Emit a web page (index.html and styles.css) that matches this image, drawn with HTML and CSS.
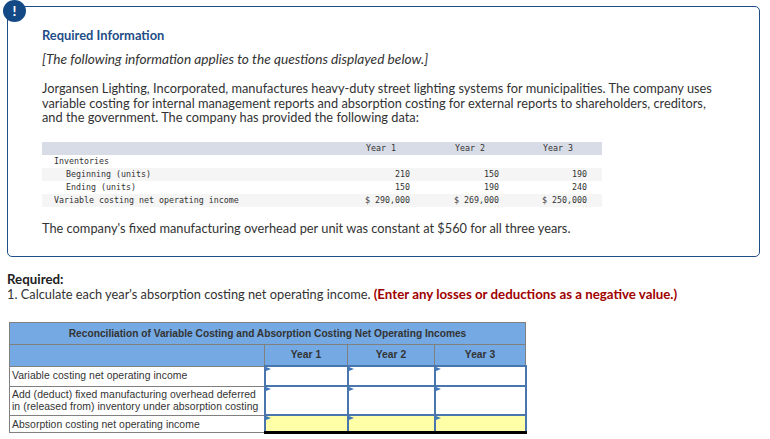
FILE: index.html
```html
<!DOCTYPE html>
<html lang="en">
<head>
<meta charset="utf-8">
<title>Required Information</title>
<link rel="stylesheet" href="styles.css">
</head>
<body>
<section class="info">
  <div class="badge">!</div>
  <h2 class="info-title">Required Information</h2>
  <p class="note">[The following information applies to the questions displayed below.]</p>
  <p class="para">Jorgansen Lighting, Incorporated, manufactures heavy-duty street lighting systems for municipalities. The company uses variable costing for internal management reports and absorption costing for external reports to shareholders, creditors, and the government. The company has provided the following data:</p>
  <table class="data">
    <colgroup><col class="dc0"><col class="dc1"><col class="dc2"><col class="dc3"></colgroup>
    <tr class="data-head"><td></td><td class="yr">Year 1</td><td class="yr">Year 2</td><td class="yr">Year 3</td></tr>
    <tr><td class="l1">Inventories</td><td></td><td></td><td></td></tr>
    <tr class="alt"><td class="l2">Beginning (units)</td><td class="num">210</td><td class="num">150</td><td class="num">190</td></tr>
    <tr><td class="l2">Ending (units)</td><td class="num">150</td><td class="num">190</td><td class="num">240</td></tr>
    <tr class="alt"><td class="l1">Variable costing net operating income</td><td class="num">$ 290,000</td><td class="num">$ 269,000</td><td class="num">$ 250,000</td></tr>
  </table>
  <p class="para last">The company's fixed manufacturing overhead per unit was constant at $560 for all three years.</p>
</section>
<section class="req">
  <strong class="req-title">Required:</strong>
  <p class="req-text">1. Calculate each year's absorption costing net operating income. <strong class="red">(Enter any losses or deductions as a negative value.)</strong></p>
</section>
<table class="recon">
  <colgroup><col class="rc0"><col class="rc1"><col class="rc2"><col class="rc3"></colgroup>
  <tr class="title-row"><th colspan="4">Reconciliation of Variable Costing and Absorption Costing Net Operating Incomes</th></tr>
  <tr class="head-row"><th></th><th>Year 1</th><th>Year 2</th><th>Year 3</th></tr>
  <tr class="r1"><td class="lab">Variable costing net operating income</td><td class="cell"></td><td class="cell"></td><td class="cell"></td></tr>
  <tr class="r2"><td class="lab">Add (deduct) fixed manufacturing overhead deferred<br>in (released from) inventory under absorption costing</td><td class="cell"></td><td class="cell"></td><td class="cell"></td></tr>
  <tr class="r3"><td class="lab">Absorption costing net operating income</td><td class="cell total"></td><td class="cell total"></td><td class="cell total"></td></tr>
</table>
</body>
</html>
```
FILE: styles.css
```css
html, body { margin: 0; padding: 0; background: #fff; }
body {
  width: 770px;
  height: 439px;
  overflow: hidden;
  font-family: "Lato", "Open Sans", sans-serif;
  color: #333;
  position: relative;
}
.info {
  box-sizing: border-box;
  width: 753px;
  height: 251px;
  margin: 6px 0 0 7px;
  padding: 21px 34px 0 34px;
  border: 1px solid #1f4e87;
  border-radius: 5px;
  position: relative;
}
.badge {
  position: absolute;
  left: -5px;
  top: -7px;
  width: 23px;
  height: 22px;
  border-radius: 50%;
  background: #134a86;
  color: #fff;
  font: bold 14px/21px "Lato", sans-serif;
  text-align: center;
}
.info-title {
  margin: 0;
  font-size: 12.9px;
  line-height: 15px;
  font-weight: 700;
  color: #1f4e87;
}
.note {
  margin: 8px 0 0;
  font-size: 13.7px;
  line-height: 15px;
  font-style: italic;
}
.para {
  margin: 15px 0 0;
  font-size: 12.8px;
  line-height: 14.5px;
  width: 676px;
}
.data {
  border-collapse: collapse;
  width: 560px;
  margin-top: 17px;
  table-layout: fixed;
  font-family: "DejaVu Sans Mono", monospace;
  font-size: 8.3px;
  line-height: 13px;
  color: #333;
}
.dc0 { width: 300px; }
.dc1 { width: 83px; }
.dc2 { width: 89px; }
.dc3 { width: 88px; }
.data td { padding: 0; height: 13px; white-space: pre; }
.data-head { background: #d8dce6; }
.alt { background: #f5f5f5; }
.data td.l1 { padding-left: 12px; }
.data td.l2 { padding-left: 24px; }
.data td.yr { text-align: right; padding-right: 29px; }
.data td.num { text-align: right; padding-right: 15px; }
.para.last { margin-top: 14px; width: auto; line-height: 15px; }
.req { margin: 15px 0 0 7px; font-size: 12.8px; line-height: 15px; }
.req-title { display: block; font-weight: 700; font-size: 13.3px; color: #222; }
.req-text { margin: 0; }
.red { color: #a00000; font-weight: 700; font-size: 13.3px; }
.recon {
  position: absolute;
  left: 9px;
  top: 322px;
  width: 516px;
  border-collapse: collapse;
  table-layout: fixed;
  font-family: "Liberation Sans", Arial, sans-serif;
  color: #333;
}
.rc0 { width: 255px; }
.rc1 { width: 83px; }
.rc2 { width: 87px; }
.rc3 { width: 91px; }
.recon th, .recon td { border: 1px solid #808080; padding: 0; }
.title-row th {
  background: #74a9e3;
  height: 21px;
  font-size: 10.2px;
  font-weight: 700;
}
.head-row th {
  background: #74a9e3;
  height: 18px;
  font-size: 10.3px;
  font-weight: 700;
  padding-bottom: 2px;
}
.recon td.lab {
  background: #fff;
  padding: 0 0 0 2px;
  font-size: 10.4px;
  letter-spacing: 0.06px;
  line-height: 12px;
  white-space: nowrap;
}
.r1 td { height: 18px; }
.r2 td { height: 27px; }
.r3 td { height: 15px; }
.recon .r3 td.lab { padding-top: 2px; height: 13px; }
.recon td.cell {
  background: #fff;
  border: 2px solid #4a76ae;
  position: relative;
}
.cell::before {
  content: "";
  position: absolute;
  left: 0;
  top: 0;
  border-left: 5px solid #3f78bd;
  border-top: 2.5px solid transparent;
  border-bottom: 2.5px solid transparent;
}
.recon td.total { background: #ffffa8; border-bottom: 3px solid #000; border-top-color: #123; }
```
